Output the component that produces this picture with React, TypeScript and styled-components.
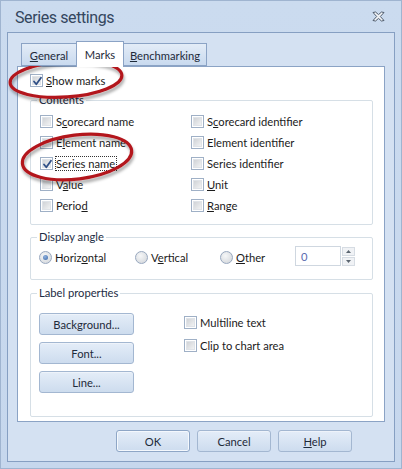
import React from "react";
import styled, { createGlobalStyle } from "styled-components";

const GlobalStyle = createGlobalStyle`
  html, body {
    margin: 0;
    padding: 0;
    background: #c8d9ee;
  }
  body {
    font-family: Lato, "Liberation Sans", Arial, sans-serif;
    font-size: 11px;
    color: #1b1b1b;
  }
`;

const Window = styled.div`
  position: relative;
  width: 402px;
  height: 469px;
  box-sizing: border-box;
  border: 1px solid #9fb4d0;
  background: linear-gradient(#cbdbef, #c6d7ed);
  display: flex;
  flex-direction: column;
`;

const TitleBar = styled.div`
  height: 31px;
  display: flex;
  align-items: center;
  justify-content: space-between;
  padding: 0 16px 0 14px;
`;

const Title = styled.div`
  font-family: Roboto, "Liberation Sans", sans-serif;
  font-size: 16px;
  color: #34465e;
  letter-spacing: -0.4px;
  margin-top: 2px;
`;

const ClientFrame = styled.div`
  margin: 0 6px 6px 6px;
  flex: 1;
  border: 1px solid #869fc2;
  background: #d4e1f2;
  padding: 8px 9px 0 9px;
  display: flex;
  flex-direction: column;
`;

const TabStrip = styled.div`
  display: flex;
  align-items: flex-end;
  height: 25px;
  padding-left: 4px;
  position: relative;
  z-index: 1;
`;

const Tab = styled.div<{ $active?: boolean; $w: number }>`
  box-sizing: border-box;
  width: ${(p) => p.$w}px;
  height: ${(p) => (p.$active ? 26 : 23)}px;
  margin-bottom: ${(p) => (p.$active ? -1 : 0)}px;
  border: 1px solid #8ba3c5;
  border-bottom: ${(p) => (p.$active ? "none" : "1px solid #8ba3c5")};
  margin-left: ${(p) => (p.$active ? -1 : 0)}px;
  margin-right: ${(p) => (p.$active ? -1 : 0)}px;
  background: ${(p) =>
    p.$active ? "#ffffff" : "linear-gradient(#e3ecf7, #c9daef)"};
  display: flex;
  align-items: center;
  justify-content: center;
  padding-top: ${(p) => (p.$active ? 0 : 2)}px;
  font-size: 11.2px;
  color: #1e2a3a;
  z-index: ${(p) => (p.$active ? 2 : 1)};
`;

const Panel = styled.div`
  height: 356px;
  box-sizing: border-box;
  background: #ffffff;
  border: 1px solid #8ba3c5;
  padding: 7px 11px 0 12px;
  display: flex;
  flex-direction: column;
`;

const Group = styled.div<{ $h: number; $top: number }>`
  position: relative;
  box-sizing: border-box;
  height: ${(p) => p.$h}px;
  margin-top: ${(p) => p.$top}px;
  border: 1px solid #d6dfe6;
  border-radius: 2px;
`;

const GroupLabel = styled.div`
  position: absolute;
  top: -8px;
  left: 6px;
  padding: 0 2px;
  background: #ffffff;
  font-size: 11.2px;
  color: #1d2d44;
`;

const CheckGrid = styled.div`
  display: grid;
  grid-template-columns: 151px 1fr;
  grid-auto-rows: 21px;
  padding: 10px 0 0 9px;
`;

const OptionRow = styled.label`
  display: flex;
  align-items: center;
  gap: 3px;
  font-size: 11.2px;
  color: #1b1b1b;
  white-space: nowrap;
`;

const Box = styled.span`
  position: relative;
  width: 13px;
  height: 13px;
  box-sizing: border-box;
  border: 1px solid #9fb0c6;
  background: #ffffff;
  flex: none;
  &::after {
    content: "";
    position: absolute;
    left: 1px;
    top: 1px;
    right: 1px;
    bottom: 1px;
    background: linear-gradient(135deg, #d0d3d7, #f1f2f3);
    border: 1px solid #dfe3e8;
    box-sizing: border-box;
  }
`;

const CheckMark = styled.svg`
  position: absolute;
  left: 0;
  top: 0;
  z-index: 1;
`;

const Focus = styled.span`
  outline: 1px dotted #333;
  outline-offset: 0px;
  padding: 0 1px 0 0;
`;

const RadioRow = styled.div`
  display: flex;
  align-items: center;
  padding: 10px 0 0 8px;
`;

const RadioItem = styled.label<{ $w: number }>`
  width: ${(p) => p.$w}px;
  display: flex;
  align-items: center;
  gap: 3px;
  font-size: 11.2px;
`;

const RadioCircle = styled.span<{ $on?: boolean }>`
  position: relative;
  width: 13px;
  height: 13px;
  box-sizing: border-box;
  border-radius: 50%;
  border: 1px solid #98a8bf;
  background: radial-gradient(circle at 40% 35%, #f6f7f8, #cfd3d8);
  flex: none;
  &::after {
    content: "";
    display: ${(p) => (p.$on ? "block" : "none")};
    position: absolute;
    left: 3px;
    top: 3px;
    width: 5px;
    height: 5px;
    border-radius: 50%;
    background: radial-gradient(circle at 40% 35%, #8fb1dd, #3a67a8);
  }
`;

const Spinner = styled.div`
  display: flex;
  margin-top: -2px;
`;

const SpinInput = styled.div`
  width: 46px;
  height: 20px;
  box-sizing: border-box;
  border: 1px solid #cfd7e0;
  padding: 3px 5px;
  font-size: 11.2px;
  color: #5a6cb0;
`;

const SpinButtons = styled.div`
  display: flex;
  flex-direction: column;
  gap: 1px;
  margin-left: 1px;
  padding-top: 1px;
`;

const SpinBtn = styled.div`
  width: 13px;
  height: 9px;
  box-sizing: border-box;
  border: 1px solid #d6dce3;
  background: #f0f2f5;
  display: flex;
  align-items: center;
  justify-content: center;
`;

const LabelBody = styled.div`
  display: flex;
  padding: 19px 0 0 8px;
  gap: 50px;
`;

const ButtonCol = styled.div`
  display: flex;
  flex-direction: column;
  gap: 7px;
`;

const CheckCol = styled.div`
  display: flex;
  flex-direction: column;
  padding-top: 3px;
  gap: 10px;
`;

const Button = styled.div<{ $w: number; $default?: boolean }>`
  width: ${(p) => p.$w}px;
  height: 22px;
  box-sizing: border-box;
  border: 1px solid ${(p) => (p.$default ? "#8ea6c6" : "#a3b7d1")};
  border-radius: 3px;
  background: linear-gradient(#e4edf8, #cddcee);
  box-shadow: ${(p) => (p.$default ? "inset 0 0 0 1px #f4f8fd" : "inset 0 1px 0 #eef3fa")};
  display: flex;
  align-items: center;
  justify-content: center;
  font-size: 11.2px;
  color: #1e2a3a;
`;

const Footer = styled.div`
  display: flex;
  justify-content: flex-end;
  gap: 7px;
  padding: 8px 33px 0 0;
`;

const Overlay = styled.svg`
  position: absolute;
  left: 0;
  top: 0;
  pointer-events: none;
`;

function Check({ checked }: { checked?: boolean }) {
  return (
    <Box>
      {checked && (
        <CheckMark width="13" height="13" viewBox="0 0 13 13">
          <path
            d="M3 6.5 L5.3 9.3 L10 2.8"
            fill="none"
            stroke="#2f4f86"
            strokeWidth="1.8"
            strokeLinecap="round"
            strokeLinejoin="round"
          />
        </CheckMark>
      )}
    </Box>
  );
}

function Opt({
  label,
  u,
  checked,
  focus,
}: {
  label: string;
  u?: number;
  checked?: boolean;
  focus?: boolean;
}) {
  const text =
    u === undefined ? (
      label
    ) : (
      <>
        {label.slice(0, u)}
        <u>{label[u]}</u>
        {label.slice(u + 1)}
      </>
    );
  return (
    <OptionRow>
      <Check checked={checked} />
      {focus ? <Focus>{text}</Focus> : <span>{text}</span>}
    </OptionRow>
  );
}

function Radio({ label, u, on, w }: { label: string; u: number; on?: boolean; w: number }) {
  return (
    <RadioItem $w={w}>
      <RadioCircle $on={on} />
      <span>
        {label.slice(0, u)}
        <u>{label[u]}</u>
        {label.slice(u + 1)}
      </span>
    </RadioItem>
  );
}

export default function App() {
  return (
    <>
      <GlobalStyle />
      <Window>
        <TitleBar>
          <Title>Series settings</Title>
          <svg width="13" height="11" viewBox="0 0 13 11">
            <path
              d="M1 1.5 L3.5 1 L6.5 3.6 L9.5 1 L12 1.5 L8.3 5.5 L12 9.5 L9.5 10 L6.5 7.4 L3.5 10 L1 9.5 L4.7 5.5 Z"
              fill="#f4f6f9"
              stroke="#4d5a6b"
              strokeWidth="1"
              strokeLinejoin="round"
            />
          </svg>
        </TitleBar>
        <ClientFrame>
          <TabStrip>
            <Tab $w={56}>
              <span>
                <u>G</u>eneral
              </span>
            </Tab>
            <Tab $w={48} $active>
              Marks
            </Tab>
            <Tab $w={84}>
              <span>
                <u>B</u>enchmarking
              </span>
            </Tab>
          </TabStrip>
          <Panel>
            <Opt label="Show marks" u={0} checked />
            <Group $h={125} $top={13}>
              <GroupLabel>Contents</GroupLabel>
              <CheckGrid>
                <Opt label="Scorecard name" u={1} />
                <Opt label="Scorecard identifier" u={1} />
                <Opt label="Element name" u={1} />
                <Opt label="Element identifier" />
                <Opt label="Series name" checked focus />
                <Opt label="Series identifier" />
                <Opt label="Value" u={1} />
                <Opt label="Unit" u={0} />
                <Opt label="Period" u={5} />
                <Opt label="Range" u={0} />
              </CheckGrid>
            </Group>
            <Group $h={43} $top={12}>
              <GroupLabel>Display angle</GroupLabel>
              <RadioRow>
                <Radio label="Horizontal" u={5} on w={96} />
                <Radio label="Vertical" u={1} w={85} />
                <Radio label="Other" u={0} w={75} />
                <Spinner>
                  <SpinInput>0</SpinInput>
                  <SpinButtons>
                    <SpinBtn>
                      <svg width="5" height="3" viewBox="0 0 5 3">
                        <path d="M0 3 L2.5 0 L5 3 Z" fill="#5b6570" />
                      </svg>
                    </SpinBtn>
                    <SpinBtn>
                      <svg width="5" height="3" viewBox="0 0 5 3">
                        <path d="M0 0 L2.5 3 L5 0 Z" fill="#5b6570" />
                      </svg>
                    </SpinBtn>
                  </SpinButtons>
                </Spinner>
              </RadioRow>
            </Group>
            <Group $h={124} $top={13}>
              <GroupLabel>Label properties</GroupLabel>
              <LabelBody>
                <ButtonCol>
                  <Button $w={95}>Background...</Button>
                  <Button $w={95}>Font...</Button>
                  <Button $w={95}>Line...</Button>
                </ButtonCol>
                <CheckCol>
                  <Opt label="Multiline text" />
                  <Opt label="Clip to chart area" />
                </CheckCol>
              </LabelBody>
            </Group>
          </Panel>
          <Footer>
            <Button $w={74} $default>
              OK
            </Button>
            <Button $w={74}>Cancel</Button>
            <Button $w={74}>
              <span>
                <u>H</u>elp
              </span>
            </Button>
          </Footer>
        </ClientFrame>
        <Overlay width="402" height="469" viewBox="0 0 402 469">
          <defs>
            <filter id="sh" x="-20%" y="-20%" width="140%" height="160%">
              <feDropShadow dx="1" dy="3" stdDeviation="1.6" floodColor="#000" floodOpacity="0.35" />
            </filter>
          </defs>
          <g filter="url(#sh)" fill="none" stroke="#b3161d" strokeWidth="3.2">
            <ellipse cx="65" cy="78" rx="56" ry="18" transform="rotate(-4 65 78)" />
            <ellipse cx="76" cy="156" rx="55" ry="22" transform="rotate(-7 76 156)" />
          </g>
        </Overlay>
      </Window>
    </>
  );
}
